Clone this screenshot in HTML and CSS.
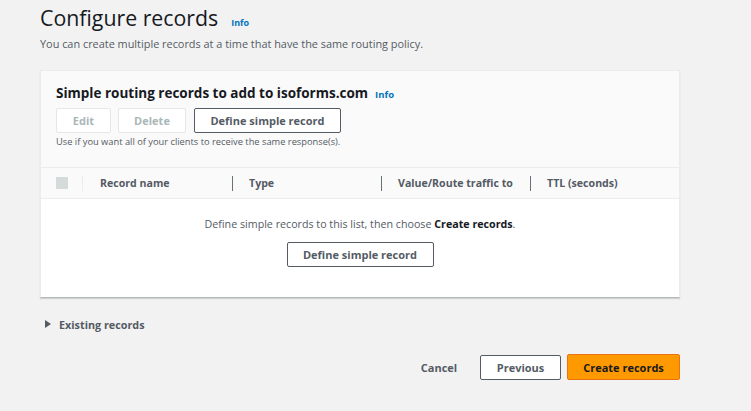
FILE: index.html
```html
<!DOCTYPE html>
<html lang="en">
<head>
<meta charset="utf-8">
<title>Configure records</title>
<link rel="stylesheet" href="styles.css">
</head>
<body>
<main class="page">
  <header class="page-head">
    <h1 class="title">Configure records</h1>
    <a class="info" href="#">Info</a>
  </header>
  <p class="desc">You can create multiple records at a time that have the same routing policy.</p>

  <section class="card">
    <div class="card-head">
      <div class="card-title-row">
        <h2 class="card-title">Simple routing records to add to isoforms.com</h2>
        <a class="info info-lg" href="#">Info</a>
      </div>
      <div class="actions">
        <button class="btn btn-disabled btn-edit">Edit</button>
        <button class="btn btn-disabled btn-delete">Delete</button>
        <button class="btn btn-normal btn-define">Define simple record</button>
      </div>
      <p class="hint">Use if you want all of your clients to receive the same response(s).</p>
    </div>
    <div class="table-head">
      <div class="th th-check"><span class="checkbox"></span></div>
      <div class="th"><span class="divider"></span><span>Record name</span></div>
      <div class="th"><span class="divider"></span><span>Type</span></div>
      <div class="th"><span class="divider"></span><span>Value/Route traffic to</span></div>
      <div class="th"><span class="divider"></span><span>TTL (seconds)</span></div>
    </div>
    <div class="empty">
      <p class="empty-text">Define simple records to this list, then choose <b>Create records</b>.</p>
      <button class="btn btn-normal btn-define">Define simple record</button>
    </div>
  </section>

  <div class="existing">
    <span class="caret"></span>
    <span class="existing-label">Existing records</span>
  </div>

  <footer class="footer">
    <button class="btn btn-link">Cancel</button>
    <button class="btn btn-normal btn-prev">Previous</button>
    <button class="btn btn-primary">Create records</button>
  </footer>
</main>
</body>
</html>
```

FILE: styles.css
```css
* { box-sizing: border-box; }
html, body { margin: 0; padding: 0; }
body {
  background: #f2f2f2;
  font-family: "Open Sans", "Noto Sans", Arial, sans-serif;
  color: #16191f;
  width: 751px;
  height: 411px;
  overflow: hidden;
}
.page {
  width: 640px;
  margin-left: 40px;
  padding-top: 3px;
}
.page-head {
  display: flex;
  align-items: baseline;
  gap: 13px;
}
.title {
  margin: 0;
  font-size: 21.3px;
  font-weight: 400;
  line-height: 30px;
  color: #16191f;
}
.info {
  color: #0073bb;
  font-size: 9px;
  font-weight: 700;
  text-decoration: none;
}
.info-lg { font-size: 9.5px; }
.desc {
  margin: 3px 0 0;
  font-size: 10.9px;
  line-height: 16px;
  color: #545b64;
}
.card {
  margin-top: 18px;
  background: #fff;
  border: 1px solid #eaeded;
  border-bottom-color: #b5b9b9;
  box-shadow: 0 1px 1px rgba(0, 28, 36, 0.15);
  height: 228px;
}
.card-head {
  background: #fafafa;
  padding: 12px 15px 0;
  height: 97px;
  border-bottom: 1px solid #eaeded;
}
.card-title-row {
  display: flex;
  align-items: baseline;
  gap: 7px;
}
.card-title {
  margin: 0;
  font-size: 13.5px;
  font-weight: 700;
  line-height: 20px;
  color: #16191f;
}
.actions {
  display: flex;
  gap: 7px;
  margin-top: 5px;
}
.btn {
  height: 25px;
  font-family: inherit;
  font-size: 11px;
  font-weight: 700;
  padding: 0;
  background: #fff;
  cursor: pointer;
  border-radius: 2px;
}
.btn-disabled {
  border: 1px solid #e4e8e8;
  color: #aab7b8;
}
.btn-normal {
  border: 1px solid #545b64;
  color: #545b64;
}
.btn-edit { width: 55px; }
.btn-delete { width: 68px; }
.btn-define { width: 147px; margin-left: 1px; }
.hint {
  margin: 2px 0 0;
  font-size: 9.3px;
  line-height: 14px;
  color: #545b64;
}
.table-head {
  display: grid;
  grid-template-columns: 42px repeat(4, 149px);
  height: 31px;
  background: #fafafa;
  border-bottom: 1px solid #eaeded;
}
.th {
  display: flex;
  align-items: center;
  gap: 16px;
  font-size: 10.6px;
  font-weight: 700;
  color: #545b64;
}
.th-check {
  padding-left: 15px;
  border-right: 1px solid #eaeded;
  height: 16px;
  align-self: center;
}
.checkbox {
  width: 12px;
  height: 12px;
  background: #d5dbdb;
  border-radius: 1px;
}
.divider {
  width: 1px;
  height: 15px;
  background: #687078;
}
.th:nth-child(2) .divider { visibility: hidden; }
.empty {
  display: flex;
  flex-direction: column;
  align-items: center;
  padding-top: 16px;
}
.empty-text {
  margin: 0;
  font-size: 10.7px;
  line-height: 18px;
  color: #545b64;
}
.empty-text b { color: #16191f; }
.empty .btn-define {
  margin: 9px 0 0;
  width: 147px;
}
.existing {
  display: flex;
  align-items: center;
  gap: 8px;
  margin-top: 18px;
  padding-left: 5px;
  height: 16px;
}
.caret {
  width: 0;
  height: 0;
  border-top: 4px solid transparent;
  border-bottom: 4px solid transparent;
  border-left: 6px solid #545b64;
}
.existing-label {
  font-size: 10.8px;
  font-weight: 700;
  color: #545b64;
}
.footer {
  display: flex;
  justify-content: flex-end;
  align-items: center;
  margin-top: 22px;
  gap: 6px;
}
.btn-link {
  border: none;
  background: transparent;
  color: #545b64;
  width: 54px;
  margin-right: 8px;
}
.btn-prev { width: 81px; }
.btn-primary {
  width: 113px;
  height: 26px;
  border: 1px solid #ec7211;
  background: #ff9900;
  color: #16191f;
}
```
